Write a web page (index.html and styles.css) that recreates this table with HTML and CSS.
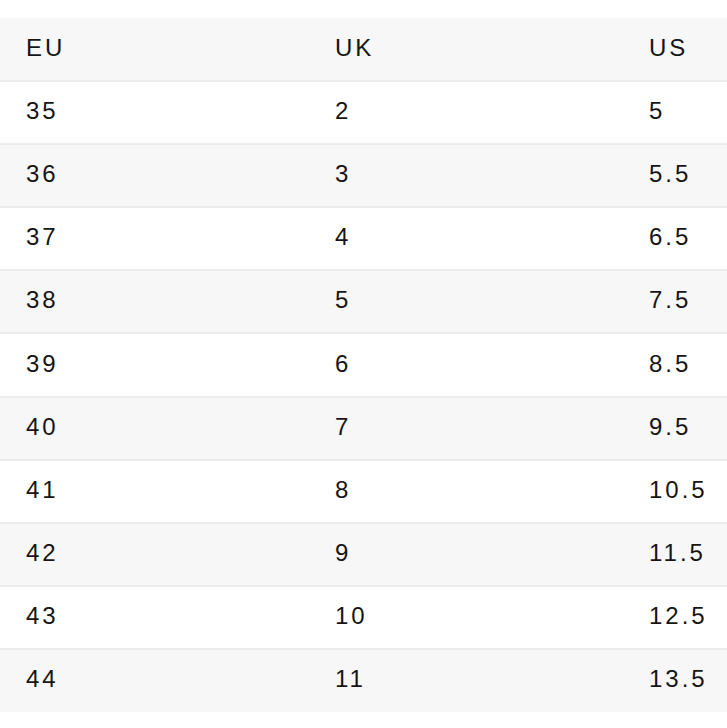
FILE: index.html
```html
<!DOCTYPE html>
<html>
<head>
<meta charset="utf-8">
<link rel="stylesheet" href="styles.css">
</head>
<body>
<table class="sizes">
  <colgroup><col class="c1"><col class="c2"><col class="c3"></colgroup>
  <thead>
    <tr><th>EU</th><th>UK</th><th>US</th></tr>
  </thead>
  <tbody>
    <tr><td>35</td><td>2</td><td>5</td></tr>
    <tr><td>36</td><td>3</td><td>5.5</td></tr>
    <tr><td>37</td><td>4</td><td>6.5</td></tr>
    <tr><td>38</td><td>5</td><td>7.5</td></tr>
    <tr><td>39</td><td>6</td><td>8.5</td></tr>
    <tr><td>40</td><td>7</td><td>9.5</td></tr>
    <tr><td>41</td><td>8</td><td>10.5</td></tr>
    <tr><td>42</td><td>9</td><td>11.5</td></tr>
    <tr><td>43</td><td>10</td><td>12.5</td></tr>
    <tr><td>44</td><td>11</td><td>13.5</td></tr>
  </tbody>
</table>
</body>
</html>
```
FILE: styles.css
```css
html, body {
  margin: 0;
  padding: 0;
  background: #ffffff;
}
body {
  padding-top: 18px;
  font-family: "Liberation Sans", Arial, sans-serif;
  color: #151515;
}
.sizes {
  width: 727px;
  border-collapse: collapse;
  table-layout: fixed;
}
.c1 { width: 309px; }
.c2 { width: 314px; }
.c3 { width: 104px; }
.sizes th,
.sizes td {
  height: 61.1px;
  padding: 0 0 3px 26px;
  box-sizing: border-box;
  text-align: left;
  font-weight: normal;
  font-size: 24px;
  letter-spacing: 3px;
  border-bottom: 2px solid #ececec;
  vertical-align: middle;
}
.sizes tr { height: 63.1px; }
.sizes thead tr,
.sizes tbody tr:nth-child(even) {
  background: #f7f7f7;
}
.sizes tbody tr:last-child td {
  border-bottom: none;
}
```
